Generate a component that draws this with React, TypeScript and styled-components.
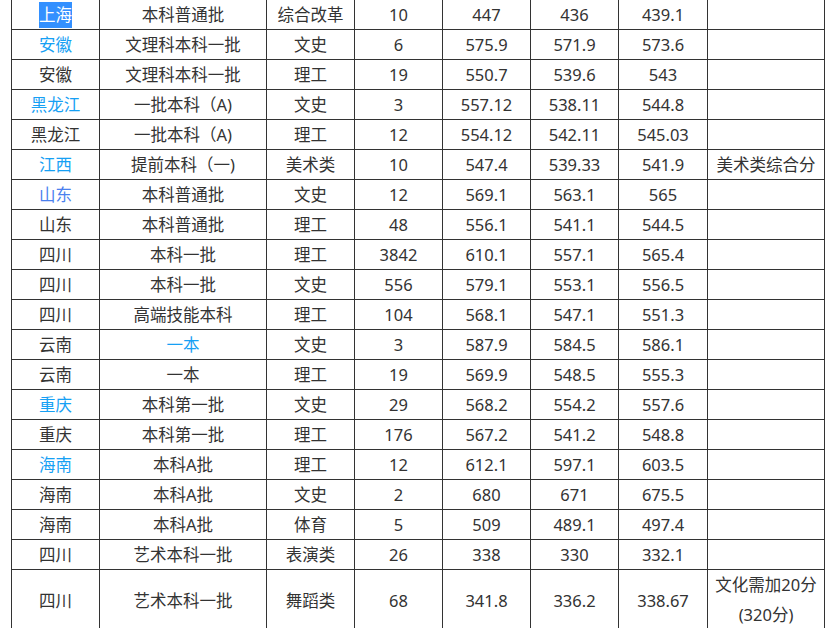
import React from "react";
import styled, { createGlobalStyle } from "styled-components";

const GlobalStyle = createGlobalStyle`
  html, body {
    margin: 0;
    padding: 0;
    background: #fff;
  }
`;

const Page = styled.div`
  padding-left: 11px;
  margin-top: -1px;
  font-family: "Noto Sans", "Noto Sans CJK SC", sans-serif;
  font-size: 16.5px;
  color: #333;
`;

const ScoreTable = styled.table`
  border-collapse: collapse;
  table-layout: fixed;
  width: 814px;
`;

const Cell = styled.td<{ $tone?: "plain" | "link" | "visited" }>`
  border: 1px solid #333;
  padding: 0;
  height: 29px;
  line-height: 29px;
  text-align: center;
  white-space: nowrap;
  color: ${(p) =>
    p.$tone === "link" ? "#16a0f4" : p.$tone === "visited" ? "#4a80ee" : "#333"};
`;

const NoteCell = styled(Cell)`
  line-height: 30px;
  white-space: normal;
`;

const Picked = styled.span`
  background: #3390ff;
  color: #fff;
  padding: 1px 0 2px;
`;

type Tone = "plain" | "link" | "visited";

type Row = {
  prov: string;
  provTone?: Tone;
  batch: string;
  batchTone?: Tone;
  kind: string;
  count: string;
  high: string;
  low: string;
  avg: string;
  note?: string;
};

const rows: Row[] = [
  { prov: "上海", batch: "本科普通批", kind: "综合改革", count: "10", high: "447", low: "436", avg: "439.1" },
  { prov: "安徽", provTone: "link", batch: "文理科本科一批", kind: "文史", count: "6", high: "575.9", low: "571.9", avg: "573.6" },
  { prov: "安徽", batch: "文理科本科一批", kind: "理工", count: "19", high: "550.7", low: "539.6", avg: "543" },
  { prov: "黑龙江", provTone: "link", batch: "一批本科（A)", kind: "文史", count: "3", high: "557.12", low: "538.11", avg: "544.8" },
  { prov: "黑龙江", batch: "一批本科（A)", kind: "理工", count: "12", high: "554.12", low: "542.11", avg: "545.03" },
  { prov: "江西", provTone: "link", batch: "提前本科（一)", kind: "美术类", count: "10", high: "547.4", low: "539.33", avg: "541.9", note: "美术类综合分" },
  { prov: "山东", provTone: "visited", batch: "本科普通批", kind: "文史", count: "12", high: "569.1", low: "563.1", avg: "565" },
  { prov: "山东", batch: "本科普通批", kind: "理工", count: "48", high: "556.1", low: "541.1", avg: "544.5" },
  { prov: "四川", batch: "本科一批", kind: "理工", count: "3842", high: "610.1", low: "557.1", avg: "565.4" },
  { prov: "四川", batch: "本科一批", kind: "文史", count: "556", high: "579.1", low: "553.1", avg: "556.5" },
  { prov: "四川", batch: "高端技能本科", kind: "理工", count: "104", high: "568.1", low: "547.1", avg: "551.3" },
  { prov: "云南", batch: "一本", batchTone: "link", kind: "文史", count: "3", high: "587.9", low: "584.5", avg: "586.1" },
  { prov: "云南", batch: "一本", kind: "理工", count: "19", high: "569.9", low: "548.5", avg: "555.3" },
  { prov: "重庆", provTone: "link", batch: "本科第一批", kind: "文史", count: "29", high: "568.2", low: "554.2", avg: "557.6" },
  { prov: "重庆", batch: "本科第一批", kind: "理工", count: "176", high: "567.2", low: "541.2", avg: "548.8" },
  { prov: "海南", provTone: "link", batch: "本科A批", kind: "理工", count: "12", high: "612.1", low: "597.1", avg: "603.5" },
  { prov: "海南", batch: "本科A批", kind: "文史", count: "2", high: "680", low: "671", avg: "675.5" },
  { prov: "海南", batch: "本科A批", kind: "体育", count: "5", high: "509", low: "489.1", avg: "497.4" },
  { prov: "四川", batch: "艺术本科一批", kind: "表演类", count: "26", high: "338", low: "330", avg: "332.1" },
  { prov: "四川", batch: "艺术本科一批", kind: "舞蹈类", count: "68", high: "341.8", low: "336.2", avg: "338.67", note: "文化需加20分(320分)" },
];

const widths = [88, 167, 88, 88, 88, 88, 89, 117];

const App: React.FC = () => {
  return (
    <Page>
      <GlobalStyle />
      <ScoreTable>
        <colgroup>
          {widths.map((w, i) => (
            <col key={i} style={{ width: w }} />
          ))}
        </colgroup>
        <tbody>
          {rows.map((r, i) => (
            <tr key={i}>
              <Cell $tone={r.provTone}>{i === 0 ? <Picked>{r.prov}</Picked> : r.prov}</Cell>
              <Cell $tone={r.batchTone}>{r.batch}</Cell>
              <Cell>{r.kind}</Cell>
              <Cell>{r.count}</Cell>
              <Cell>{r.high}</Cell>
              <Cell>{r.low}</Cell>
              <Cell>{r.avg}</Cell>
              {r.note && r.note.length > 8 ? (
                <NoteCell>
                  文化需加20分
                  <br />
                  (320分)
                </NoteCell>
              ) : (
                <Cell>{r.note}</Cell>
              )}
            </tr>
          ))}
        </tbody>
      </ScoreTable>
    </Page>
  );
};

export default App;
